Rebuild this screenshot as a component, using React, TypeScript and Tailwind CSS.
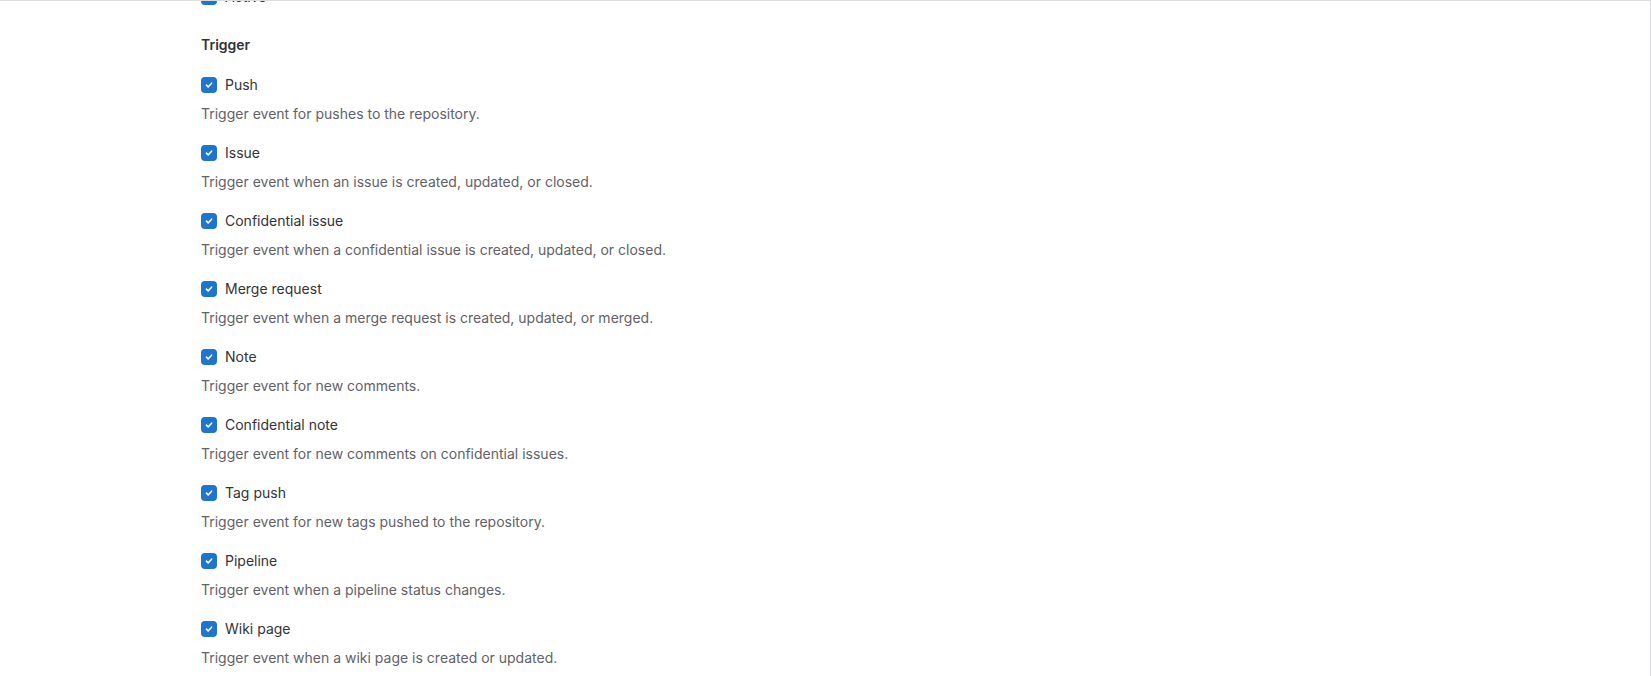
import React from "react";

const items: [string, string][] = [
  ["Push", "Trigger event for pushes to the repository."],
  ["Issue", "Trigger event when an issue is created, updated, or closed."],
  ["Confidential issue", "Trigger event when a confidential issue is created, updated, or closed."],
  ["Merge request", "Trigger event when a merge request is created, updated, or merged."],
  ["Note", "Trigger event for new comments."],
  ["Confidential note", "Trigger event for new comments on confidential issues."],
  ["Tag push", "Trigger event for new tags pushed to the repository."],
  ["Pipeline", "Trigger event when a pipeline status changes."],
  ["Wiki page", "Trigger event when a wiki page is created or updated."],
];

function Check() {
  return (
    <span className="flex h-4 w-4 shrink-0 items-center justify-center rounded-[4px] bg-[#1f75cb]">
      <svg width="8" height="8" viewBox="0 0 8 8" fill="none">
        <path d="M1.4 4.2 L3.2 5.9 L6.6 2.2" stroke="white" strokeWidth="1.6" strokeLinecap="round" strokeLinejoin="round" />
      </svg>
    </span>
  );
}

function Row({ label }: { label: string }) {
  return (
    <div className="flex h-5 items-center gap-2">
      <Check />
      <span className="text-[14px] leading-5 text-[#333238]">{label}</span>
    </div>
  );
}

export default function App() {
  return (
    <div
      className="h-[676px] w-full overflow-hidden border-t border-r border-[#dcdcde] bg-white"
      style={{ fontFamily: "Inter, 'Noto Sans', sans-serif" }}
    >
      <div className="mt-[-14px] pl-[201px]">
        <Row label="Active" />
        <div className="mt-[28px] text-[14px] font-semibold leading-5 text-[#333238]">Trigger</div>
        <div className="mt-5 flex flex-col gap-[19px]">
          {items.map(([label, desc]) => (
            <div key={label}>
              <Row label={label} />
              <div className="mt-[9px] text-[14px] leading-5 text-[#626168]">{desc}</div>
            </div>
          ))}
        </div>
      </div>
    </div>
  );
}
